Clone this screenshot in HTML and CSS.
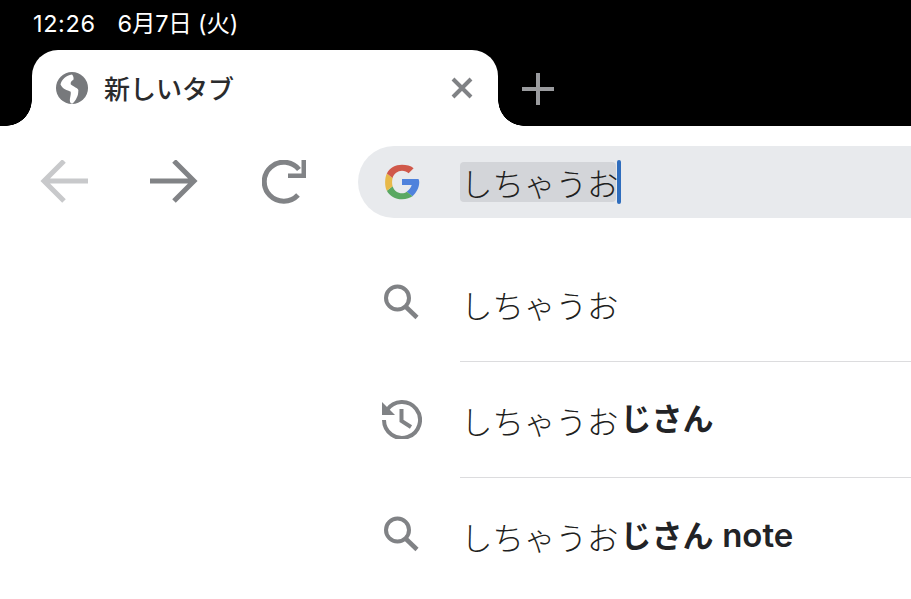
FILE: index.html
```html
<!DOCTYPE html>
<html lang="ja">
<head>
<meta charset="utf-8">
<title>新しいタブ</title>
<link rel="stylesheet" href="styles.css">
</head>
<body>
<header class="chrome">
  <div class="status"><span class="time">12:26</span><span class="date">6月7日 (火)</span></div>
  <div class="tabstrip">
    <div class="tab">
      <svg class="globe" width="32" height="32" viewBox="0 0 32 32"><circle cx="16" cy="16" r="16" fill="#77797c"/><path d="M4.500 12.500C5.500 8 10 3 16 2.500c1.500 1.500 2 4 1.300 5.500-1.500.5-3 2-2.600 4.300 1.500 1.800 3.500 2 4.800 3.200 2.300 1 3.300 2.500 2.800 3.500 0 2.500-.5 5-1.600 6.700-1 2.200-2.500 4.500-4.500 6-2.200-.3-2.700-2.500-2.200-5.500.5-2.700 1-4.500.7-6.500C12 18.500 8.500 17.500 7 16c-1-1-2-2.200-2.500-3.500z" fill="#fff"/></svg>
      <span class="tab-title">新しいタブ</span>
      <svg class="close" width="22" height="22" viewBox="0 0 22 22"><path d="M2 2l18 18M20 2L2 20" stroke="#808285" stroke-width="4" fill="none"/></svg>
    </div>
    <svg class="plus" width="32" height="32" viewBox="0 0 32 32"><path d="M16 0v32M0 16h32" stroke="#9a9b9e" stroke-width="4" fill="none"/></svg>
  </div>
</header>
<div class="toolbar">
  <nav class="nav">
    <svg width="48" height="44" viewBox="0 0 48 44"><path d="M48 21H4M24 1L4 21l20 20" stroke="#c8c9cb" stroke-width="5" fill="none"/></svg>
    <svg width="48" height="44" viewBox="0 0 48 44"><path d="M0 21h44M24 1l20 20-20 20" stroke="#818386" stroke-width="5" fill="none"/></svg>
    <svg width="44" height="44" viewBox="0 0 44 44"><path d="M37 9.500A19.500 19.500 0 1 0 36 35" stroke="#818386" stroke-width="5" fill="none"/><path d="M44 0v18H26v-4.500h13.500V0z" fill="#818386"/></svg>
  </nav>
  <div class="omnibox">
    <svg class="g" width="36" height="36" viewBox="0 0 48 48"><path fill="#4f82dc" d="M46 20H24v8h13c-1.200 3.600-3.400 6.500-6.800 9l7.600 6C43 38.500 47 32 47 24c0-1.400-.4-2.800-1-4z"/><path fill="#5aa862" d="M24 47c6 0 11.300-2 14-4l-7.600-6c-2 1.400-4 2-6.400 2-5.600 0-10.800-3.800-12.500-9.500L3.800 35.500C7.500 42.500 15 47 24 47z"/><path fill="#e8b949" d="M11.500 29.500C10.500 26 10.500 22 11.500 18.500L3.800 12.500C1 18 .5 29.500 3.800 35.500z"/><path fill="#d0584a" d="M24 9c3.600 0 6.500 1.300 8.800 3.400l6.700-6.700C35.500 2 30 1 24 1 15 1 7.500 5.500 3.800 12.500l7.700 6C13.200 12.800 18.400 9 24 9z"/></svg>
    <div class="query"><span class="selected">しちゃうお</span><span class="caret"></span></div>
  </div>
</div>
<main class="suggestions">
  <div class="row">
    <svg class="icon" width="40" height="40" viewBox="0 0 40 40"><circle cx="15.500" cy="15" r="11.500" stroke="#808285" stroke-width="4" fill="none"/><path d="M23.500 23.500L35 34.500" stroke="#808285" stroke-width="4.500" fill="none"/></svg>
    <div class="text">しちゃうお</div>
  </div>
  <div class="row">
    <svg class="icon" width="40" height="40" viewBox="0 0 40 40"><path d="M5 11A18 18 0 1 1 2 21" stroke="#808285" stroke-width="4" fill="none"/><path d="M0 3v13h13z" fill="#808285"/><path d="M19.500 10v12l9.500 6" stroke="#808285" stroke-width="4" fill="none"/></svg>
    <div class="text">しちゃうお<b>じさん</b></div>
  </div>
  <div class="row">
    <svg class="icon" width="40" height="40" viewBox="0 0 40 40"><circle cx="15.500" cy="15" r="11.500" stroke="#808285" stroke-width="4" fill="none"/><path d="M23.500 23.500L35 34.500" stroke="#808285" stroke-width="4.500" fill="none"/></svg>
    <div class="text">しちゃうお<b>じさん <span class="latin">note</span></b></div>
  </div>
</main>
</body>
</html>
```
FILE: styles.css
```css
* { box-sizing: border-box; }
html, body { margin: 0; height: 100%; overflow: hidden; background: #fff; }
body { font-family: "Liberation Sans", "Noto Sans CJK JP", sans-serif; color: #1f1f21; }
svg { display: block; flex: none; }

.chrome { background: #000; height: 126px; }
.status { height: 50px; padding: 11px 0 0 33px; display: flex; gap: 22px; color: #fff; font: 400 23.500px/25px Inter, "Noto Sans CJK JP", sans-serif; }
.time { letter-spacing: .6px; }
.date { letter-spacing: -.2px; }

.tabstrip { height: 76px; display: flex; align-items: center; padding-left: 32px; }
.tab { position: relative; width: 466px; height: 76px; background: #fff; border-radius: 26px 26px 0 0; display: flex; align-items: center; padding: 0 25px 0 24px; margin-right: 24px; }
.tab::before, .tab::after { content: ""; position: absolute; bottom: 0; width: 26px; height: 26px; }
.tab::before { left: -26px; background: radial-gradient(circle at 0 0, #000 25.500px, #fff 26px); }
.tab::after { right: -26px; background: radial-gradient(circle at 100% 0, #000 25.500px, #fff 26px); }
.globe { margin-right: 16px; }
.tab-title { flex: 1; font: 500 26px/32px "Noto Sans CJK JP", sans-serif; color: #2a2b2d; }
.plus { margin-top: 2px; }

.toolbar { height: 110px; display: flex; padding-top: 20px; }
.nav { width: 358px; height: 72px; padding: 0 0 0 40px; display: flex; align-items: center; gap: 62px; flex: none; }
.nav svg + svg + svg { margin-left: 2px; }
.omnibox { flex: 1; height: 72px; background: #e8eaed; border-radius: 36px 0 0 36px; display: flex; align-items: center; padding-left: 26px; gap: 40px; }
.query { display: flex; align-items: center; font: 300 31.500px/40px "Noto Sans CJK JP", sans-serif; }
.selected { background: #d3d5d9; border-radius: 4px; width: 156px; height: 40px; padding-left: 1px; white-space: nowrap; }
.caret { width: 4px; height: 44px; margin-left: 1px; background: #2f6dbd; border-radius: 2px; }

.suggestions { padding: 10px 0 0 382px; }
.row { height: 116px; display: flex; align-items: center; gap: 38px; }
.icon { margin-top: -2px; }
.text { flex: 1; height: 100%; display: flex; align-items: center; font: 300 31.500px/40px "Noto Sans CJK JP", sans-serif; padding-left: 1px; border-bottom: 1px solid #dcdcde; }
.row:last-child .text { border-bottom: 0; }
.text b { font-size: 31px; font-weight: 700; color: #222326; font-family: "Liberation Sans", "Noto Sans CJK JP", sans-serif; margin-left: 2px; }
.latin { font: 600 33px/40px Inter, "Liberation Sans", sans-serif; }
```
